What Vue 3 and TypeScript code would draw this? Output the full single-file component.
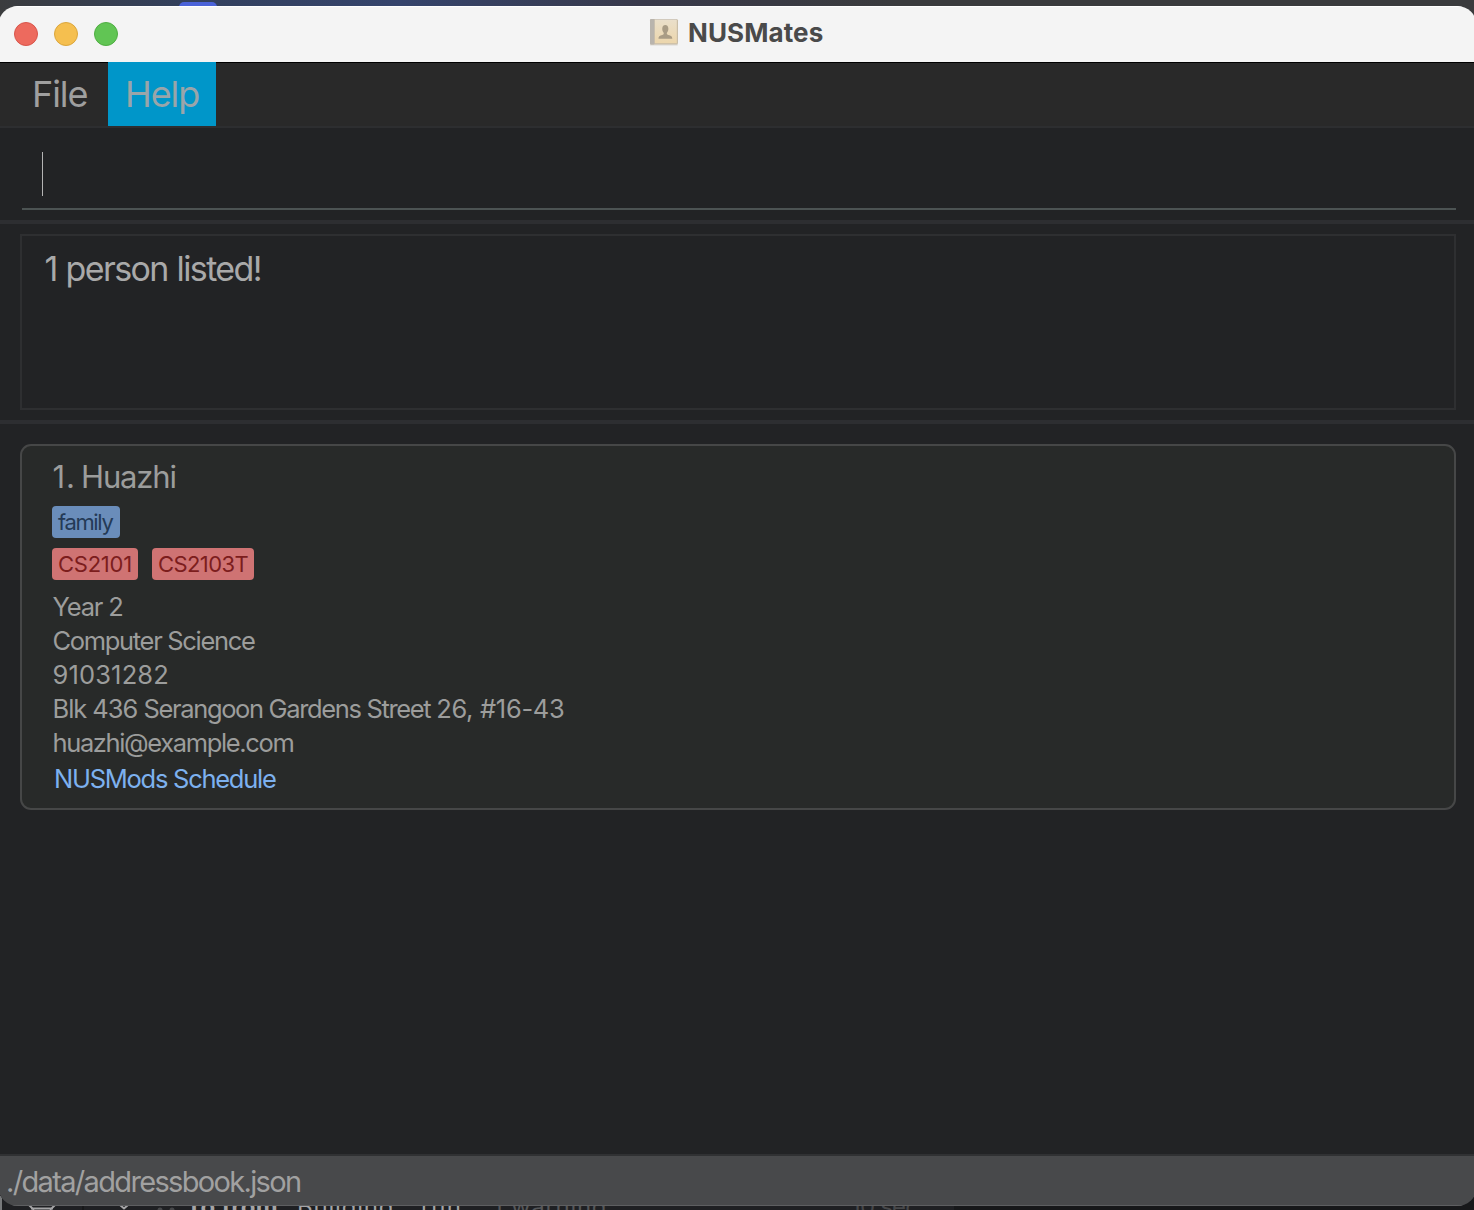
<script setup lang="ts">
const menus = [
  { label: 'File', active: false },
  { label: 'Help', active: true },
]
const person = {
  index: '1.',
  name: 'Huazhi',
  tags: ['family'],
  modules: ['CS2101', 'CS2103T'],
  details: [
    { parts: ['Year 2'], cls: 'd-year' },
    { parts: ['Computer Science'], cls: 'd-major' },
    { parts: ['91031282'], cls: 'd-phone' },
    { parts: ['Blk 436 ', 'Serangoon Gardens Street ', '26, #16-43'], cls: 'd-address' },
    { parts: ['huazhi@example.com'], cls: 'd-email' },
  ],
}
</script>

<template>
  <div class="desktop">
    <div class="tab-behind"></div>
    <div class="log-behind">
      <svg class="glyphs" width="180" height="14" viewBox="0 0 180 14">
        <path d="M29 9l5 5M55 9l-5 5M31 12.500h22M120 9l4 3.500 4-3.500" fill="none" stroke="#a5a5a7" stroke-width="2" />
        <path d="M83 10v4" stroke="#111" />
        <circle cx="160" cy="14" r="2.500" fill="#47484a" />
        <circle cx="172" cy="14" r="2.500" fill="#47484a" />
      </svg>
      <b class="log-a">To from:</b>
      <span class="log-b">Building</span>
      <span class="log-c">run</span>
      <span class="log-d">1 warning</span>
      <span class="log-e">10 sec</span>
    </div>
    <div class="window">
      <header class="titlebar">
        <div class="lights">
          <i class="light red"></i><i class="light yellow"></i><i class="light green"></i>
        </div>
        <div class="title">
          <svg class="book" width="30" height="30" viewBox="0 0 30 30">
            <defs>
              <linearGradient id="cover" x1="0" y1="0" x2="0" y2="1">
                <stop offset="0" stop-color="#eadfca" />
                <stop offset="1" stop-color="#ecd6ac" />
              </linearGradient>
            </defs>
            <rect x="1.200" y="26" width="27.500" height="1.600" fill="#deddda" />
            <rect x="1" y="1" width="28" height="25.500" rx="1.500" fill="#c9bda7" />
            <rect x="1" y="1" width="4.500" height="25.500" rx="1" fill="#b9b4ad" />
            <rect x="5.800" y="2" width="22" height="23.200" fill="url(#cover)" />
            <path d="M5.800 1.500h22" stroke="#d2cabd" />
            <path d="M9.500 20.700c0-3 2-3 4.800-4.200.7-.5.6-1.400 0-2.200-.9-1.100-1.200-2.500-1-4.200.2-2 1.300-3 3-3s2.800 1 3 3c.2 1.700-.1 3.100-1 4.200-.6.8-.7 1.700 0 2.200 2.800 1.200 5 1.200 5 4.200z" fill="#a99c85" />
          </svg>
          <span class="app-name">NUSMates</span>
        </div>
      </header>
      <nav class="menubar">
        <div v-for="m in menus" :key="m.label" class="menu" :class="{ active: m.active }">
          <span>{{ m.label }}</span>
        </div>
      </nav>
      <section class="command"><div class="field"><i class="caret"></i></div></section>
      <section class="result"><div class="result-box"><span>1 person listed!</span></div></section>
      <main class="list">
        <article class="card">
          <div class="name"><span class="index">{{ person.index }}</span><span>{{ person.name }}</span></div>
          <div class="chips">
            <span v-for="t in person.tags" :key="t" class="chip tag"><span>{{ t }}</span></span>
          </div>
          <div class="chips">
            <span v-for="t in person.modules" :key="t" class="chip module" :class="t.toLowerCase()"><span>{{ t }}</span></span>
          </div>
          <div class="details">
            <div v-for="d in person.details" :key="d.cls" class="detail" :class="d.cls"><span v-for="p in d.parts" :key="p">{{ p }}</span></div>
          </div>
          <a class="link">NUSMods Schedule</a>
        </article>
      </main>
      <footer class="status"><span>./data/addressbook.json</span></footer>
    </div>
  </div>
</template>

<style>
body { background: #1b1c1e; overflow: hidden; }
</style>

<style scoped>
* { box-sizing: border-box; }
.desktop {
  position: relative;
  width: 1474px;
  height: 1210px;
  padding: 6px 0 4px;
  overflow: hidden;
  font-family: Inter, "Liberation Sans", sans-serif;
  background: linear-gradient(90deg, #3b3c3e 0, #33405c 180px, #35446c 400px, #38394a 640px, #3a3b3d 900px) top / 100% 40px no-repeat, #17181a;
}
.tab-behind {
  position: absolute;
  left: 179px;
  top: 2px;
  width: 38px;
  height: 10px;
  border-radius: 6px;
  background: #4a62d8;
}
.log-behind {
  position: absolute;
  left: 0;
  bottom: 0;
  width: 954px;
  height: 14px;
  background: #1f2023;
  border-left: 2px solid #77797b;
  overflow: hidden;
  font-size: 24px;
  line-height: 28px;
  color: #a5a5a7;
  white-space: nowrap;
}
.log-behind > * { position: absolute; top: -3px; }
.log-behind .glyphs { left: -2px; top: 0; }
.log-a { left: 184px; letter-spacing: 0.3px; }
.log-b { left: 295px; letter-spacing: 0.8px; }
.log-c { left: 419px; letter-spacing: 1.2px; }
.log-d { left: 491px; color: #565759; letter-spacing: 0.7px; }
.log-e { left: 849px; color: #47484a; letter-spacing: -0.8px; }
.window {
  height: 1200px;
  display: flex;
  flex-direction: column;
  position: relative;
  clip-path: inset(0 -3px 0 -2px round 20px);
  background: #222325;
}
.titlebar {
  flex: none;
  height: 56px;
  display: flex;
  align-items: center;
  padding-bottom: 2px;
  background: #f4f4f4;
  border-top: 1px solid #fff;
}
.lights { display: flex; gap: 16px; padding-left: 14px; }
.light { width: 24px; height: 24px; border-radius: 50%; border: 1px solid; }
.red { background: #ed6a5e; border-color: #d8554b; }
.yellow { background: #f5bf4f; border-color: #dba63c; }
.green { background: #61c554; border-color: #4fae42; }
.title { display: flex; align-items: center; margin-left: 531px; gap: 9px; padding-bottom: 2px; }
.app-name { font-size: 26px; font-weight: 700; color: #4a4a4a; line-height: 32px; white-space: nowrap; letter-spacing: 0.1px; }
.menubar {
  flex: none;
  height: 66px;
  display: flex;
  padding-left: 15px;
  background: #292929;
  border-top: 1px solid #000;
  border-bottom: 2px solid #2d2e30;
}
.menu {
  height: 64px;
  margin-top: -1px;
  padding-left: 17px;
  width: 93px;
  line-height: 64px;
  font-size: 36px;
  color: #9f9f9f;
  letter-spacing: -1.1px;
  white-space: nowrap;
}
.menu.active { width: 108px; background: #0096c9; color: #9aa5a9; }
.command {
  flex: none;
  height: 92px;
  padding: 14px 18px 0 22px;
}
.field { height: 68px; border-bottom: 2px solid #4c5353; padding: 10px 0 0 20px; }
.caret { display: block; width: 1px; height: 44px; background: #b4b4b4; }
.result {
  flex: none;
  height: 204px;
  padding: 10px 18px 10px 20px;
  border-top: 4px solid #2d2e31;
  border-bottom: 4px solid #2d2e31;
}
.result-box {
  height: 176px;
  border: 2px solid #2e2f31;
  padding: 12px 0 0 22.5px;
  font-size: 34px;
  line-height: 42px;
  letter-spacing: -1.6px;
  word-spacing: 0.8px;
  color: #a9a9a9;
}
.list { flex: 1; padding: 20px 18px 0 20px; }
.card {
  height: 366px;
  border: 2px solid #464747;
  border-radius: 11px;
  background: #282a29;
  padding: 12px 0 0 30px;
  color: #9c9d9c;
}
.name { display: flex; height: 38px; font-size: 31px; line-height: 38px; letter-spacing: -1.15px; padding-left: 0.5px; margin-bottom: 10px; }
.index { width: 28.5px; letter-spacing: 0.8px; }
.chips { display: flex; gap: 14px; height: 32px; margin-bottom: 10px; }
.chip {
  height: 32px;
  border-radius: 4px;
  padding: 0 6px;
  font-size: 22px;
  line-height: 33px;
  white-space: nowrap;
}
.tag { width: 68px; background: #6a8dba; color: #243a56; letter-spacing: -1.35px; }
.module { background: #cf7373; color: #7c1d1d; }
.cs2101 { width: 86px; letter-spacing: -0.25px; }
.cs2103t { width: 102px; letter-spacing: -0.6px; }
.detail { height: 34px; font-size: 25.5px; line-height: 34px; padding-left: 0.5px; white-space: pre; }
.d-year { letter-spacing: -1.15px; }
.d-major { letter-spacing: -1.32px; }
.d-phone { letter-spacing: 0.15px; }
.d-address { letter-spacing: -1.04px; }
.d-address span:nth-child(2) { letter-spacing: -1.35px; }
.d-address span:nth-child(3) { letter-spacing: -0.3px; }
.d-email { letter-spacing: -1.37px; }
.link { display: block; padding: 2px 0 0 2px; font-size: 25.5px; line-height: 34px; letter-spacing: -1.26px; color: #7db1ef; }
.status {
  flex: none;
  height: 52px;
  background: #48494b;
  border-top: 2px solid #303133;
  border-bottom: 1px solid #5e5f61;
  padding-left: 6px;
  font-size: 29px;
  line-height: 52px;
  letter-spacing: -1.66px;
  color: #a1a1a1;
}
</style>
